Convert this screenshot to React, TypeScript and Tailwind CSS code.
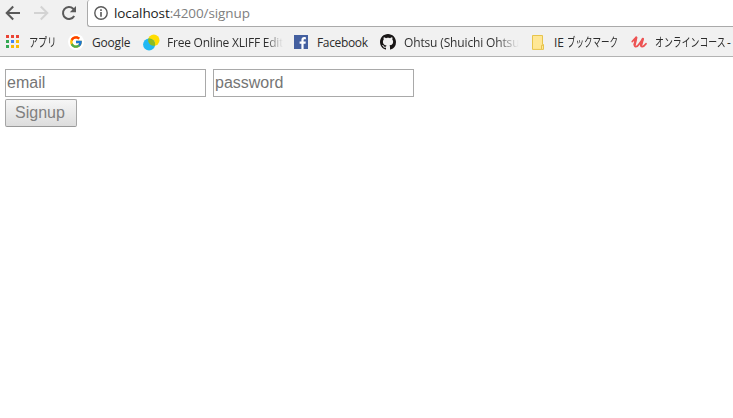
import type { ReactNode } from 'react';
import { FcGoogle } from 'react-icons/fc';

function Bookmark({ className, icon, children }: { className: string; icon: ReactNode; children: ReactNode }) {
  return (
    <div className={`flex h-full shrink-0 items-center whitespace-nowrap ${className}`}>
      <span className="flex w-6 shrink-0 items-center">{icon}</span>
      {children}
    </div>
  );
}

const appColors = ['#ea4335', '#ea4335', '#ea4335', '#34a853', '#4285f4', '#fbbc05', '#34a853', '#fbbc05', '#fbbc05'];

function AppsIcon() {
  return (
    <svg width="14" height="14" viewBox="0 0 14 14" className="-mt-px" shapeRendering="crispEdges">
      {appColors.map((color, i) => (
        <rect key={i} x={(i % 3) * 5} y={Math.floor(i / 3) * 5} width="3" height="3" fill={color} />
      ))}
    </svg>
  );
}

function XliffIcon() {
  return (
    <svg width="17" height="17" viewBox="0 0 17 17" className="-mt-px">
      <circle cx="10.8" cy="6.2" r="5.7" fill="#ffdd00" />
      <circle cx="6.1" cy="10.4" r="6" fill="#20b8f3" />
      <path d="M5.4 4.5A6 6 0 0 1 12 11.7A5.7 5.7 0 0 1 5.4 4.5Z" fill="#8dbd21" />
    </svg>
  );
}

function FacebookIcon() {
  return (
    <svg width="14" height="14" viewBox="0 0 14 14" className="-mt-0.5">
      <path d="M0 0h14v14H0z" fill="#4460a0" />
      <path d="M7.4 14V8.8H5.6V6.6h1.8V5c0-1.9 1.1-2.9 2.8-2.9l1.7.1v2h-1.2c-.9 0-1.1.4-1.1 1.1v1.3h2.2l-.3 2.2H9.6V14z" fill="#fff" />
    </svg>
  );
}

function GithubIcon() {
  return (
    <svg width="16" height="16" viewBox="0 0 16 16" className="-mt-px">
      <path
        fill="#181616"
        d="M8 0C3.58 0 0 3.58 0 8c0 3.54 2.29 6.53 5.47 7.59.4.07.55-.17.55-.38 0-.19-.01-.82-.01-1.49-2.01.37-2.53-.49-2.69-.94-.09-.23-.48-.94-.82-1.13-.28-.15-.68-.52-.01-.53.63-.01 1.08.58 1.23.82.72 1.21 1.87.87 2.33.66.07-.52.28-.87.51-1.07-1.78-.2-3.64-.89-3.64-3.95 0-.87.31-1.59.82-2.15-.08-.2-.36-1.02.08-2.12 0 0 .67-.21 2.2.82.64-.18 1.32-.27 2-.27s1.36.09 2 .27c1.53-1.04 2.2-.82 2.2-.82.44 1.1.16 1.92.08 2.12.51.56.82 1.27.82 2.15 0 3.07-1.87 3.75-3.65 3.95.29.25.54.73.54 1.48 0 1.07-.01 1.93-.01 2.2 0 .21.15.46.55.38A8.01 8.01 0 0 0 16 8c0-4.42-3.58-8-8-8z"
      />
    </svg>
  );
}

function FolderIcon() {
  return (
    <svg width="13" height="15" viewBox="0 0 13 15" className="-mt-px ml-px">
      <path d="M.5.5h10v9h1v4.9H.5z" fill="#ffe795" stroke="#e7c44c" />
      <path d="M9.5 14v-3.7h1.5" fill="none" stroke="#e7c44c" />
    </svg>
  );
}

function UdemyIcon() {
  return (
    <svg width="17" height="15" viewBox="0 0 17 15" className="-mt-px" fill="none" stroke="#ed5353" strokeLinecap="round" strokeLinejoin="round">
      <path d="M1.3 6.5C3 4.7 4.5 3.2 5.3 2.5L3.7 8.5C2.8 12 5.5 13 8 9.2L11.8 4L9.9 9.2C9.3 12.5 12.3 12.5 15 8.7" strokeWidth="1.8" />
      <path d="M5.2 2.7L3.7 9.6M11.8 4L10.2 10" strokeWidth="2.4" />
    </svg>
  );
}

export default function App() {
  return (
    <div className="h-[418px] w-[733px] overflow-hidden bg-white font-['Open_Sans','Noto_Sans_CJK_JP',sans-serif] text-[#2c2c2c]">
      <header className="h-[57px] border-b border-[#b3b3b3] bg-[#f1f1f1]">
        <div className="flex h-[27px] items-start">
          <div className="flex w-[87px] shrink-0 pt-[5px] pl-[5px]">
            <svg width="80" height="16" viewBox="0 0 80 16" fill="none" strokeWidth="2">
              <path d="M15 8H2M8.2 1.5L1.7 8l6.5 6.5" stroke="#5a5a5a" />
              <path d="M29 8h13M35.8 1.5L42.3 8l-6.5 6.5" stroke="#d3d3d3" />
              <path d="M69.2 11A6 6 0 1 1 68.2 3.7L70 5.5" stroke="#5a5a5a" />
              <path d="M71 1v6.2h-6.2z" fill="#5a5a5a" />
            </svg>
          </div>
          <div className="flex h-[27px] flex-1 items-center rounded-l-[3px] border-b border-l border-[#aaaaaa] bg-white pl-1.5">
            <svg width="14" height="14" viewBox="0 0 14 14" className="shrink-0">
              <circle cx="7" cy="7" r="6.2" fill="none" stroke="#5a5a5a" strokeWidth="1.4" />
              <path d="M6.2 3.3h1.6v1.6H6.2zM6.2 6h1.6v4.7H6.2z" fill="#5a5a5a" />
            </svg>
            <span className="ml-1.5 text-[13.5px] leading-5 tracking-[-0.1px] text-[#222]">
              localhost<span className="text-[#808080]">:4200/signup</span>
            </span>
          </div>
        </div>
        <nav className="flex h-[29px] items-center pt-[2px] pl-[6px] text-[12px] leading-5">
          <Bookmark className="w-[63px]" icon={<AppsIcon />}>
            <span className="-ml-px inline-block origin-left scale-x-[.76]">アプリ</span>
          </Bookmark>
          <Bookmark className="w-[74px]" icon={<span className="-mt-px -ml-px flex size-4 items-center justify-center rounded-full bg-white"><FcGoogle size={14} /></span>}>
            <span className="-ml-px tracking-[-0.2px]">Google</span>
          </Bookmark>
          <Bookmark className="w-[151px]" icon={<XliffIcon />}>
            <span className="bg-linear-to-r from-[#2c2c2c] from-85% to-transparent bg-clip-text tracking-[-0.22px] text-transparent">Free Online XLIFF Edit</span>
          </Bookmark>
          <Bookmark className="w-[86px]" icon={<FacebookIcon />}>
            <span className="-ml-px tracking-[-0.35px]">Facebook</span>
          </Bookmark>
          <Bookmark className="w-[151px]" icon={<GithubIcon />}>
            <span className="bg-linear-to-r from-[#2c2c2c] from-80% to-transparent bg-clip-text tracking-[-0.15px] text-transparent">Ohtsu (Shuichi Ohtsu</span>
          </Bookmark>
          <Bookmark className="w-[100px]" icon={<FolderIcon />}>
            <span className="-ml-px">IE</span>
            <span className="ml-[3px] inline-block origin-left scale-x-[.71]">ブックマーク</span>
          </Bookmark>
          <Bookmark className="w-[102px]" icon={<UdemyIcon />}>
            <span className="inline-block w-[72px] origin-left scale-x-[.74]">オンラインコース</span>
            <span>-</span>
          </Bookmark>
        </nav>
      </header>
      <form className="pt-3 pl-[5px] font-['Liberation_Sans',Arial,sans-serif] text-[16px] leading-[18px]" onSubmit={(e) => e.preventDefault()}>
        <div className="flex gap-[7px]">
          <input className="h-7 w-[201px] border border-[#a9a9a9] bg-white px-px outline-none placeholder:text-[#757575]" placeholder="email" />
          <input className="h-7 w-[201px] border border-[#a9a9a9] bg-white px-px outline-none placeholder:text-[#757575]" type="password" placeholder="password" />
        </div>
        <button disabled className="mt-0.5 block h-7 w-[72px] rounded-[2px] border border-[#a6a6a6] border-b-[#999] bg-linear-to-b from-[#f6f6f6] to-[#dddddd] pr-0.5 pb-px text-center text-[#808080]">Signup</button>
      </form>
    </div>
  );
}
